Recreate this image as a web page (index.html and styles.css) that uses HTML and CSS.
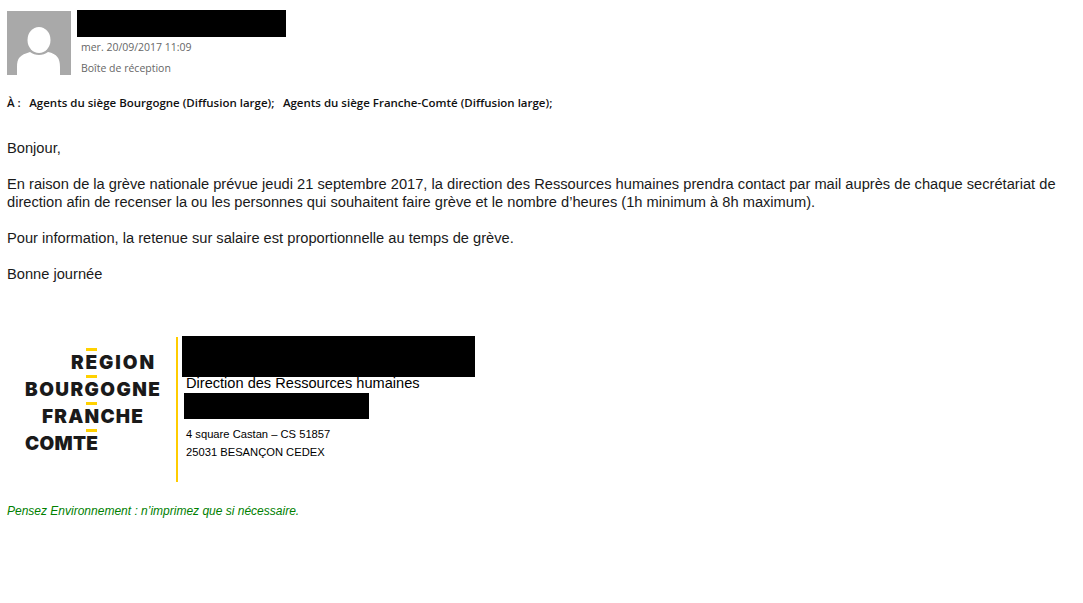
FILE: index.html
```html
<!DOCTYPE html>
<html lang="fr">
  <head>
    <meta charset="UTF-8" />
    <title>Message</title>
    <link rel="stylesheet" href="styles.css">
  </head>
  <body>
    <div class="header">
      <svg class="avatar" width="64" height="64" viewBox="0 0 64 64">
        <rect width="64" height="64" fill="#a9a9a9" />
        <ellipse cx="32" cy="29" rx="11.5" ry="13" fill="#fff" />
        <path d="M10 64 V56 C10 47 13 44 23 41 C28 45 36 45 41 41 C50 43 53 47 53 56 V64 Z" fill="#fff" />
      </svg>
      <div class="meta">
        <div class="redact redact-sender"></div>
        <p class="meta-line date">mer. 20/09/2017 11:09</p>
        <p class="meta-line folder">Boîte de réception</p>
      </div>
    </div>

    <p class="recipients">
      <span class="to">À :</span>
      <span>Agents du siège Bourgogne (Diffusion large);</span>
      <span>Agents du siège Franche-Comté (Diffusion large);</span>
    </p>

    <div class="body-text">
      <p>Bonjour,</p>
      <p>En raison de la grève nationale prévue jeudi 21 septembre 2017, la direction des Ressources humaines prendra contact par mail auprès de chaque secrétariat de direction afin de recenser la ou les personnes qui souhaitent faire grève et le nombre d’heures (1h minimum à 8h maximum).</p>
      <p>Pour information, la retenue sur salaire est proportionnelle au temps de grève.</p>
      <p>Bonne journée</p>
    </div>

    <div class="signature">
      <svg class="logo" width="169" height="145" viewBox="0 0 169 145">
        <g fill="#ffd100">
          <rect x="79" y="11" width="11" height="3" />
          <rect x="79" y="38" width="11" height="3" />
          <rect x="79" y="65" width="11" height="3" />
          <rect x="79" y="92" width="11" height="3" />
        </g>
        <g class="logo-text">
          <text x="64" y="32" textLength="83">REGION</text>
          <text x="18" y="59" textLength="135">BOURGOGNE</text>
          <text x="35" y="86" textLength="101">FRANCHE</text>
          <text x="18" y="113" textLength="73">COMTE</text>
        </g>
      </svg>
      <div class="contact">
        <div class="redact redact-name"></div>
        <p class="service">Direction des Ressources humaines</p>
        <div class="redact redact-phone"></div>
        <p class="address">4 square Castan – CS 51857</p>
        <p class="address">25031 BESANÇON CEDEX</p>
      </div>
    </div>

    <p class="green-note">Pensez Environnement : n’imprimez que si nécessaire.</p>
  </body>
</html>
```

FILE: styles.css
```css
* {
  margin: 0;
  padding: 0;
  box-sizing: border-box;
}

body {
  padding: 10px 7px 0;
  background-color: #fff;
  color: #1a1a1a;
  font-family: 'Liberation Sans', Arial, sans-serif;
}

.redact {
  background-color: #000;
}

.header {
  display: flex;
  gap: 6px;
}

.avatar {
  margin-top: 1px;
  flex-shrink: 0;
}

.redact-sender {
  width: 209px;
  height: 27px;
}

.meta-line {
  margin-left: 4px;
  font-family: 'Open Sans', sans-serif;
  font-size: 10.5px;
  line-height: 14px;
  color: #666;
}

.date {
  margin-top: 3px;
}

.folder {
  margin-top: 7px;
}

.recipients {
  margin-top: 20px;
  font-family: 'Open Sans', sans-serif;
  font-size: 11.5px;
  line-height: 16px;
  font-weight: 600;
  color: #111;
  white-space: nowrap;
}

.recipients span {
  margin-right: 5.5px;
}

.body-text {
  margin-top: 28px;
  font-size: 14.67px;
  line-height: 18px;
}

.body-text p {
  margin-bottom: 18px;
}

.signature {
  display: flex;
  margin-top: 53px;
}

.logo {
  flex-shrink: 0;
  margin-top: 1px;
  border-right: 2px solid #ffcc00;
  width: 171px;
}

.logo-text {
  font-family: Inter, sans-serif;
  font-weight: 900;
  font-size: 19px;
  fill: #1a1a1a;
}

.contact {
  margin-left: 4px;
  color: #000;
}

.redact-name {
  width: 293px;
  height: 41px;
}

.service {
  margin: -2px 0 3px 4px;
  font-size: 14.6px;
  line-height: 16px;
  height: 15px;
}

.redact-phone {
  margin-left: 2px;
  width: 185px;
  height: 26px;
}

.address {
  margin-left: 4px;
  font-size: 11.2px;
  line-height: 18px;
}

.redact-phone + .address {
  margin-top: 6px;
}

.green-note {
  margin-top: 21px;
  font-size: 12px;
  line-height: 16px;
  font-style: italic;
  color: #008000;
}
```
